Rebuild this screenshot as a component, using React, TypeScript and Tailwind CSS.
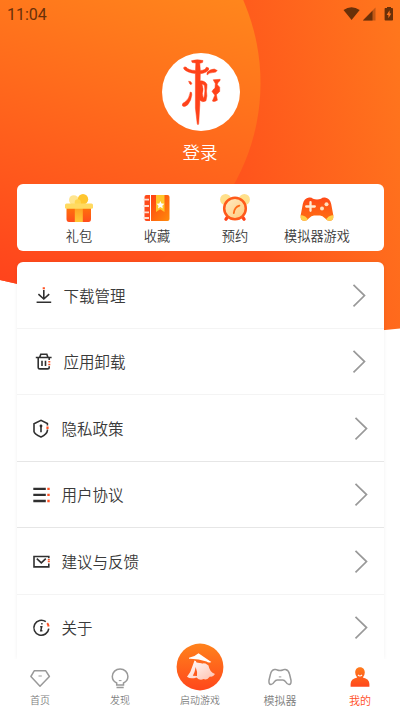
import type React from 'react'
import clsx from 'clsx'

type IconProps = { className?: string }

const Backdrop = () => (
  <svg className="absolute inset-x-0 top-0" width="400" height="340" viewBox="0 0 400 340" fill="none">
    <defs>
      <linearGradient id="base" x1="240" y1="180" x2="434" y2="134" gradientUnits="userSpaceOnUse">
        <stop stopColor="#ff541c" />
        <stop offset="1" stopColor="#ff781d" />
      </linearGradient>
      <linearGradient id="disc" x1="245" y1="0" x2="128" y2="349" gradientUnits="userSpaceOnUse">
        <stop stopColor="#ff861c" />
        <stop offset="1" stopColor="#ff3f1c" />
      </linearGradient>
      <clipPath id="sheet">
        <path d="M0 0H400V328.5Q385 330 370 331C250 337 120 307 0 280Z" />
      </clipPath>
    </defs>
    <g clipPath="url(#sheet)">
      <rect width="400" height="340" fill="url(#base)" />
      <ellipse cx="56" cy="83" rx="204.5" ry="206" fill="url(#disc)" />
    </g>
  </svg>
)

const StatusIcons = () => (
  <svg width="54" height="16" viewBox="0 0.5 54 16" fill="#693009">
    <path d="M0.5 3.4Q8.5-1.8 16.7 3.4L8.6 13.4Z" />
    <path d="M20 14V13.4L32.5 1V14Z" opacity="0.4" />
    <path d="M20 14L29.5 4.3V14Z" />
    <path
      fillRule="evenodd"
      d="M42.2 1.5H44V0H48V1.5H49.2Q50 1.5 50 2.4V13.2Q50 14 49.2 14H42.4Q41.6 14 41.6 13.2V2.4Q41.6 1.5 42.2 1.5ZM46.6 3.7L43.6 8.4H45.4V11.8L48.3 6.9H46.6Z"
    />
  </svg>
)

// Sword-and-brush emblem of the avatar
const Emblem = () => (
  <svg width="78" height="78" viewBox="0 0 78 78" fill="#ff421a" stroke="#ff421a" strokeWidth="0.5">
    <path d="M29.5 7.7Q35 6 41 7.5L40.5 9.5L37.8 10.3L38.3 17.5Q43.5 17.3 44.3 14.2Q47.5 14.2 46.7 16.8Q44.5 20 38.3 20.8L37.8 52L36.7 70.5Q36 73 35.2 70.5L33.4 55V20.6Q25 19.5 22 16.2Q20.7 13.5 24 14Q26.5 17.4 33.5 17.5L33.8 10L30.2 9.5Z" />
    <path d="M45 19.5Q48 16 52.3 16L55.3 17.5Q54 19.8 50.5 19.6Q47.5 19.5 45 22Z" />
    <path d="M26.6 28.2Q29.5 28.3 29.8 30.4Q29.5 32.4 27.8 30.9Z" />
    <path d="M28.3 39Q30 38.5 29.8 42Q29.4 47 26 51.5Q22.5 55 20.4 52.7Q19.5 50.5 23 49Q27.3 46 28.3 39Z" />
    <path
      fillRule="evenodd"
      d="M37.5 28Q42.7 27.2 45 31.5Q45 35 44.5 38Q45.5 43 44 47.8Q40.5 50 37.7 47Q36.5 44 37.5 28ZM39.8 31Q42 36 40.4 40.5Q40.5 43.5 41.8 45.5Q43.8 37 42.2 32Z"
    />
    <path d="M51.2 26.8L58.2 26.3Q58.5 28 56 29.5L55.3 31.7L57.7 34.2V38.5L54.4 41.7L55.4 47.2Q52 49.4 50.4 48L52.8 42.2L50 38.5Q51 36.4 53 35L53.3 30.6Z" />
  </svg>
)

const GiftIcon = () => (
  <svg width="30" height="30" viewBox="0 0 30 30">
    <defs>
      <linearGradient id="gift" x1="0" y1="0" x2="0" y2="1">
        <stop stopColor="#ff7708" />
        <stop offset="1" stopColor="#ff4d1d" />
      </linearGradient>
      <linearGradient id="ribbon" x1="0" y1="0" x2="0" y2="1">
        <stop stopColor="#ff9d20" />
        <stop offset="1" stopColor="#ffc835" />
      </linearGradient>
    </defs>
    <circle cx="9.8" cy="7" r="4.8" fill="#ffe58f" />
    <circle cx="19" cy="6.2" r="5.2" fill="#ffc62f" />
    <circle cx="13.8" cy="9.4" r="3.1" fill="#ffd650" />
    <path d="M2.5 13H27V26Q27 29 24.5 29H5Q2.5 29 2.5 26Z" fill="url(#gift)" />
    <path d="M10.8 14H18.8V29H10.8Z" fill="url(#ribbon)" />
    <rect x="1" y="10.6" width="28" height="5.2" rx="1.5" fill="#ffda61" />
  </svg>
)

const BookIcon = () => (
  <svg width="30" height="30" viewBox="0 0 30 30">
    <defs>
      <linearGradient id="book" x1="0" y1="0" x2="1" y2="1">
        <stop stopColor="#ff3f12" />
        <stop offset="1" stopColor="#ff8c0b" />
      </linearGradient>
    </defs>
    <path d="M4.5 2H8V28H4.5Q2.5 28 2.5 26V4Q2.5 2 4.5 2Z" fill="#ff4b1b" />
    <path d="M9 2H25.5Q27.5 2 27.5 4V26Q27.5 28 25.5 28H9Z" fill="url(#book)" />
    <path d="M1.5 6.6H7M1.5 13H7M1.5 19.4H7M1.5 25H7" stroke="#ffdccb" strokeWidth="1.8" />
    <path d="M14 2H22.5V19L18.2 16.2L14 19Z" fill="#ffc62b" />
    <path d="M18.4 8L19.5 10.5L22.3 10.8L20.3 12.7L20.8 15.4L18.4 14L16 15.4L16.5 12.7L14.5 10.8L17.3 10.5Z" fill="#fff" />
  </svg>
)

const AlarmIcon = () => (
  <svg width="30" height="30" viewBox="0 0 30 30">
    <defs>
      <linearGradient id="dial" x1="0" y1="0" x2="1" y2="1">
        <stop stopColor="#ffedc4" />
        <stop offset="1" stopColor="#ffc97b" />
      </linearGradient>
    </defs>
    <circle cx="5.6" cy="6.5" r="5.5" fill="#ffe08b" />
    <circle cx="24.4" cy="6.5" r="5.5" fill="#ffe08b" />
    <path d="M7.5 24L5.9 26.2M22.5 24L24.1 26.2" stroke="#ff431b" strokeWidth="3.2" strokeLinecap="round" />
    <circle cx="15" cy="15.5" r="10.8" fill="url(#dial)" stroke="#ff5a1a" strokeWidth="2.5" />
    <path d="M19.4 12.6Q14.4 14 13.8 20.2" stroke="#ff6b18" strokeWidth="1.8" fill="none" strokeLinecap="round" />
  </svg>
)

const GamepadIcon = () => (
  <svg width="34" height="30" viewBox="0 0 34 30">
    <defs>
      <linearGradient id="pad" x1="0" y1="0" x2="0" y2="1">
        <stop stopColor="#ff4218" />
        <stop offset="1" stopColor="#ff7412" />
      </linearGradient>
      <clipPath id="padShape">
        <path d="M9 4.6Q11.5 4.2 13 5.8Q17 7 21 5.8Q22.5 4.2 25 4.6Q30 5.4 31.2 11L33.3 22.3Q33.8 27.8 29.6 27.8Q27 27.8 25 25.2Q22.5 22.5 20 22.5H14Q11.5 22.5 9 25.2Q7 27.8 4.4 27.8Q.2 27.8 .7 22.3L2.8 11Q4 5.4 9 4.6Z" />
      </clipPath>
    </defs>
    <g clipPath="url(#padShape)">
      <rect width="34" height="30" fill="url(#pad)" />
      <path d="M0 22Q6 22 9 28H0ZM34 22Q28 22 25 28H34Z" fill="#ffd04a" />
    </g>
    <path d="M10.5 9.2V17.8M6.2 13.5H14.8" stroke="#ffead2" strokeWidth="2.3" strokeLinecap="round" />
    <circle cx="26.5" cy="11.2" r="2" fill="#ffe0be" />
    <circle cx="22" cy="15.6" r="2" fill="#ffe0be" />
  </svg>
)

const MenuIcon = ({ children }: { children: React.ReactNode }) => (
  <svg width="18" height="20" viewBox="0 0 18 20" fill="none" stroke="#303030" strokeWidth="1.6">
    {children}
  </svg>
)

const DownloadIcon = () => (
  <MenuIcon>
    <path d="M8.8 5V14M3.4 9.2L8.8 14L14.2 9.2M1.6 17.2H16.2" />
    <path d="M8.8 2.2V4.2" stroke="#ff5022" strokeWidth="2.2" />
  </MenuIcon>
)

const TrashIcon = () => (
  <MenuIcon>
    <path d="M0.8 6.5H16.6M4.8 6L5.8 3.2H11.8L12.8 6M14.2 15.2V16.2Q14.2 17.9 12.5 17.9H4.9Q3.2 17.9 3.2 16.2V6.5M14.2 6.5V9M7 9.8V15M10.5 9.8V15" />
    <path d="M14.3 9.9V11.6M14.3 12.7V14.2" stroke="#ff5022" strokeWidth="2" />
  </MenuIcon>
)

const ShieldIcon = () => (
  <MenuIcon>
    <path d="M15.4 7.5V5.5L9 2.3L2 5.7V13.6Q2.5 16.2 9 19Q14.9 16.5 15.4 12.7V11.5M9 8.5V14.3" />
    <circle cx="9" cy="8" r="1.4" fill="#303030" stroke="none" />
    <path d="M15.5 8.5V11" stroke="#ff5022" strokeWidth="2.2" />
  </MenuIcon>
)

const ListIcon = () => (
  <MenuIcon>
    <path d="M1.3 4.8H13.8M1.3 10.8H13.8M1.3 17H13.8" strokeWidth="2.3" />
    <path d="M15.3 4.8H17.7M15.3 10.8H17.7M15.3 17H17.7" stroke="#ff5022" strokeWidth="2.3" />
  </MenuIcon>
)

const MailIcon = () => (
  <MenuIcon>
    <path d="M16.8 7.2V5.5H2V15.9H16.8V12.5M4.8 7.7L9.3 11.9L13.8 7.7" />
    <path d="M16.8 8V11.2" stroke="#ff5022" strokeWidth="2" strokeDasharray="1.5 .5" />
  </MenuIcon>
)

const InfoIcon = () => (
  <MenuIcon>
    <path d="M13.8 4.7A7.5 7.5 0 1 0 16.8 11.7" />
    <path d="M15.2 6.1Q16.3 7.5 16.6 9.5" stroke="#ff5022" strokeWidth="2" />
    <path d="M8.2 9.7H9.7L8.8 13.8H10.4M9.2 6.8H10.6" strokeWidth="1.5" />
  </MenuIcon>
)

const Chevron = ({ className }: IconProps) => (
  <svg className={className} width="14" height="24" viewBox="0 0 14 24" fill="none" stroke="#999" strokeWidth="1.7">
    <path d="M1.5 1.9L12.5 12.6L1.5 23.3" />
  </svg>
)

const DiamondIcon = () => (
  <svg width="24" height="24" viewBox="0 0 24 24" fill="none" stroke="#999" strokeWidth="1.5" strokeLinejoin="round">
    <path d="M6.2 3.8H17.8L21.4 9.5L12 19.2L2.9 9.5Z" />
    <path d="M10.5 9H13.8" strokeWidth="1" />
  </svg>
)

const BulbIcon = () => (
  <svg width="24" height="24" viewBox="0 0 24 24" fill="none" stroke="#999" strokeWidth="1.5">
    <path d="M8.7 18V16Q4.3 13.8 4.3 9.5A7.8 7.6 0 0 1 19.9 9.5Q19.9 13.8 15.5 16V18ZM8.5 20.6H15.7" />
    <path d="M10.8 13.6H13.5" strokeWidth="1" />
  </svg>
)

const PadOutlineIcon = () => (
  <svg width="26" height="24" viewBox="0 1.5 26 24" fill="none" stroke="#999" strokeWidth="1.5">
    <path d="M7.5 4Q9.3 3.6 10.2 4.5Q13 5.5 15.8 4.5Q16.7 3.6 18.5 4Q21.7 4.7 22.5 8.5L24 14.7Q24.5 18.8 22 19Q20.3 19 18.7 16.4Q17.5 14.4 15.7 14.4H10.3Q8.5 14.4 7.3 16.4Q5.7 19 4 19Q1.5 18.8 2 14.7L3.5 8.5Q4.3 4.7 7.5 4Z" />
    <path d="M11.8 11.4H14.3" strokeWidth="1" />
  </svg>
)

const UserIcon = () => (
  <svg width="24" height="24" viewBox="0 1.5 24 24">
    <defs>
      <linearGradient id="user" x1="0" y1="0" x2="0" y2="1">
        <stop stopColor="#ff7b1b" />
        <stop offset="1" stopColor="#ff481c" />
      </linearGradient>
    </defs>
    <path
      d="M12 1.7C15.3 1.7 16.8 4.2 16.8 7Q16.8 10.1 14.8 12.1Q21.4 13.5 21.4 18.5V21.2H2.6V18.5Q2.6 13.5 9.2 12.1Q7.2 10.1 7.2 7C7.2 4.2 8.7 1.7 12 1.7Z"
      fill="url(#user)"
    />
    <path d="M10 9.4Q12 11.6 14 9.4" stroke="#fff" strokeWidth="1.2" fill="none" />
  </svg>
)

const LaunchIcon = () => (
  <svg className="shrink-0" width="48" height="48" viewBox="0 0 48 48">
    <defs>
      <linearGradient id="launch" x1="0" y1="0" x2="0" y2="1">
        <stop stopColor="#ff821c" />
        <stop offset="1" stopColor="#ff471b" />
      </linearGradient>
      <linearGradient id="cloak" x1="0" y1="0" x2="1" y2="1">
        <stop stopColor="#fff" />
        <stop offset="1" stopColor="#ffc0ad" />
      </linearGradient>
    </defs>
    <circle cx="24" cy="24" r="23.4" fill="url(#launch)" />
    <path
      d="M18.5 17.5Q23 20 29.5 20.5L32.5 22.5Q33.5 29 39 31Q36.8 34.5 34 33.5Q31 37.5 27.5 36Q24 38 20.5 34.5Q14.5 36.5 11 33.8Q15 29 16.5 23Z"
      fill="url(#cloak)"
    />
    <path d="M13 14.8Q19 13.5 22.5 10.2L35.3 19Q32.5 20.4 30.5 18.6Q22 15.4 13 15.7Z" fill="#fff" />
    <path d="M19.5 17L28 18.5L27 20.4L20.5 19.4Z" fill="#ff6a20" />
    <path d="M19.7 24Q21.5 28.5 21 33L16.8 32.8Q19 29 19.7 24Z" fill="#ff5a1d" />
  </svg>
)

const shortcuts = [
  { label: '礼包', icon: <GiftIcon />, className: 'w-[78px]' },
  { label: '收藏', icon: <BookIcon />, className: 'w-[78px]' },
  { label: '预约', icon: <AlarmIcon />, className: 'w-[78px]' },
  { label: '模拟器游戏', icon: <GamepadIcon />, className: 'w-[86px]' },
]

const menu = [
  { label: '下载管理', icon: <DownloadIcon />, wide: true },
  { label: '应用卸载', icon: <TrashIcon />, wide: true },
  { label: '隐私政策', icon: <ShieldIcon />, strong: true },
  { label: '用户协议', icon: <ListIcon />, strong: true },
  { label: '建议与反馈', icon: <MailIcon /> },
  { label: '关于', icon: <InfoIcon /> },
]

const tabs = [
  { label: '首页', icon: <DiamondIcon />, className: 'text-[10px]' },
  { label: '发现', icon: <BulbIcon />, className: 'text-[10px]' },
  { label: '启动游戏', icon: <LaunchIcon />, className: 'text-[10px]' },
  { label: '模拟器', icon: <PadOutlineIcon />, className: 'text-[11px]' },
  { label: '我的', icon: <UserIcon />, className: 'text-[11px]', active: true },
]

export default function App() {
  return (
    <div className="relative flex h-[710px] w-[400px] flex-col overflow-hidden bg-white font-['Noto_Sans_CJK_SC',sans-serif] font-[350] text-[#3a3a3a]">
      <Backdrop />

      <header className="relative flex h-[27px] items-center justify-between pl-[7px] pr-[3px] pt-0.5">
        <span className="font-[Roboto,sans-serif] text-[16px] font-normal text-[#693009]">11:04</span>
        <StatusIcons />
      </header>

      <section className="relative flex flex-col items-center pt-[26px]">
        <div className="ml-px size-[78px] overflow-hidden rounded-full bg-white">
          <Emblem />
        </div>
        <button className="mt-[9px] h-6 text-[17.5px] leading-6 text-white">登录</button>
      </section>

      <section className="relative ml-[17px] mr-[16px] mt-5 flex h-[67px] shrink-0 rounded-md bg-white pl-[23px] pt-[9px]">
        {shortcuts.map(({ label, icon, className }) => (
          <button key={label} className={clsx('flex shrink-0 flex-col items-center', className)}>
            {icon}
            <span className="mt-[3px] whitespace-nowrap text-[13.2px] leading-5">{label}</span>
          </button>
        ))}
      </section>

      <ul className="relative ml-[17px] mr-[16px] mt-[11px] h-[397px] shrink-0 overflow-hidden rounded-t-md bg-white shadow-[0_0_4px_rgba(0,0,0,0.06)]">
        {menu.map(({ label, icon, wide, strong }) => (
          <li
            key={label}
            className={clsx(
              'flex h-[66.5px] items-center border-b last:border-transparent',
              strong ? 'border-[#e6e6e6]' : 'border-[#f4f4f4]',
              wide ? 'pl-[17.5px] pr-[18.5px]' : 'pl-[14.5px] pr-[16.5px]',
            )}
          >
            {icon}
            <span className={clsx('text-[15.5px] leading-6', wide ? 'ml-[11px]' : 'ml-3')}>{label}</span>
            <Chevron className="ml-auto" />
          </li>
        ))}
      </ul>

      <nav className="relative grid h-[51px] shrink-0 grid-cols-5 grid-rows-[51px] bg-white">
        {tabs.map(({ label, icon, className, active }) => (
          <button
            key={label}
            className={clsx(
              'flex h-[51px] flex-col items-center justify-end pb-[2px]',
              className,
              active ? 'text-[#ff4f1f]' : 'text-[#808080]',
            )}
          >
            {icon}
            <span className="mt-px leading-4">{label}</span>
          </button>
        ))}
      </nav>
    </div>
  )
}
